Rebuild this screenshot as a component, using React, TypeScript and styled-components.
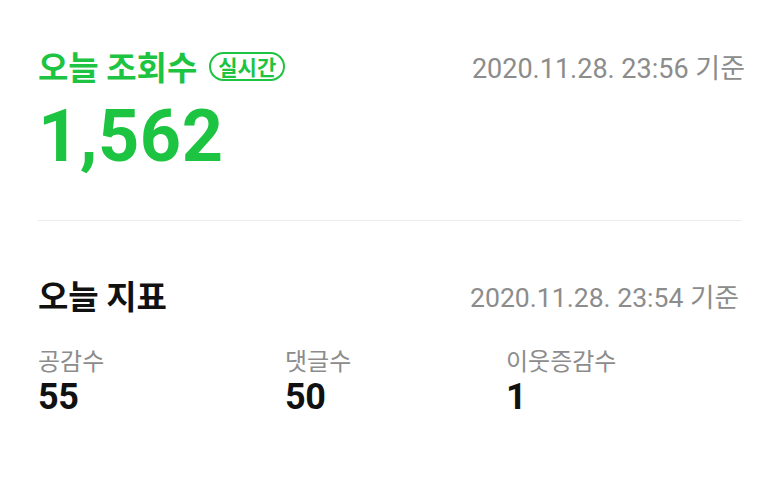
import React from "react";
import styled, { createGlobalStyle } from "styled-components";

const GlobalStyle = createGlobalStyle`
  html, body {
    margin: 0;
    padding: 0;
    background: #fff;
  }
  body {
    font-family: Roboto, "Noto Sans CJK KR", sans-serif;
  }
`;

const Page = styled.div`
  width: 773px;
  height: 477px;
  box-sizing: border-box;
  padding: 46px 28px 0 38px;
  background: #fff;
`;

const HeaderRow = styled.div`
  display: flex;
  align-items: center;
  justify-content: space-between;
`;

const TitleGroup = styled.div`
  display: flex;
  align-items: center;
  gap: 12px;
`;

const Title = styled.h2<{ $green?: boolean }>`
  margin: 0;
  font-family: "Noto Sans CJK KR", sans-serif;
  font-weight: 700;
  font-size: 33px;
  line-height: 40px;
  color: ${(p) => (p.$green ? "#1dc441" : "#111")};
`;

const LiveBadge = styled.span`
  display: inline-flex;
  align-items: center;
  box-sizing: border-box;
  height: 29px;
  padding: 0 7px;
  border: 2px solid #1dc441;
  border-radius: 15px;
  color: #1dc441;
  font-family: "Noto Sans CJK KR", sans-serif;
  font-weight: 700;
  font-size: 21px;
`;

const Stamp = styled.span<{ $small?: boolean }>`
  color: #8c8c8c;
  font-size: ${(p) => (p.$small ? "26.6px" : "27px")};
`;

const BigCount = styled.div`
  margin-top: 11px;
  font-family: Roboto, sans-serif;
  font-weight: 700;
  font-size: 72px;
  line-height: 80px;
  color: #1dc441;
  letter-spacing: 0.5px;
`;

const Divider = styled.hr`
  margin: 43px 0 0;
  border: none;
  border-top: 1px solid #ececec;
  width: 704px;
`;

const Section = styled.div`
  margin-top: 54px;
  padding-right: 6px;
`;

const Stats = styled.div`
  display: grid;
  grid-template-columns: 247px 221px 1fr;
  margin-top: 30px;
`;

const Stat = styled.div`
  display: flex;
  flex-direction: column;
`;

const StatLabel = styled.span`
  font-family: "Noto Sans CJK KR", sans-serif;
  color: #8c8c8c;
  font-size: 24px;
  line-height: 30px;
`;

const StatValue = styled.span`
  margin-top: 2px;
  font-family: Roboto, sans-serif;
  font-weight: 700;
  font-size: 36px;
  line-height: 40px;
  color: #111;
  letter-spacing: -0.5px;
`;

const stats = [
  { label: "공감수", value: "55" },
  { label: "댓글수", value: "50" },
  { label: "이웃증감수", value: "1" },
];

export default function App() {
  return (
    <>
      <GlobalStyle />
      <Page>
        <HeaderRow>
          <TitleGroup>
            <Title $green>오늘 조회수</Title>
            <LiveBadge>실시간</LiveBadge>
          </TitleGroup>
          <Stamp>2020.11.28. 23:56 기준</Stamp>
        </HeaderRow>
        <BigCount>1,562</BigCount>
        <Divider />
        <Section>
          <HeaderRow>
            <Title>오늘 지표</Title>
            <Stamp $small>2020.11.28. 23:54 기준</Stamp>
          </HeaderRow>
          <Stats>
            {stats.map((s) => (
              <Stat key={s.label}>
                <StatLabel>{s.label}</StatLabel>
                <StatValue>{s.value}</StatValue>
              </Stat>
            ))}
          </Stats>
        </Section>
      </Page>
    </>
  );
}
